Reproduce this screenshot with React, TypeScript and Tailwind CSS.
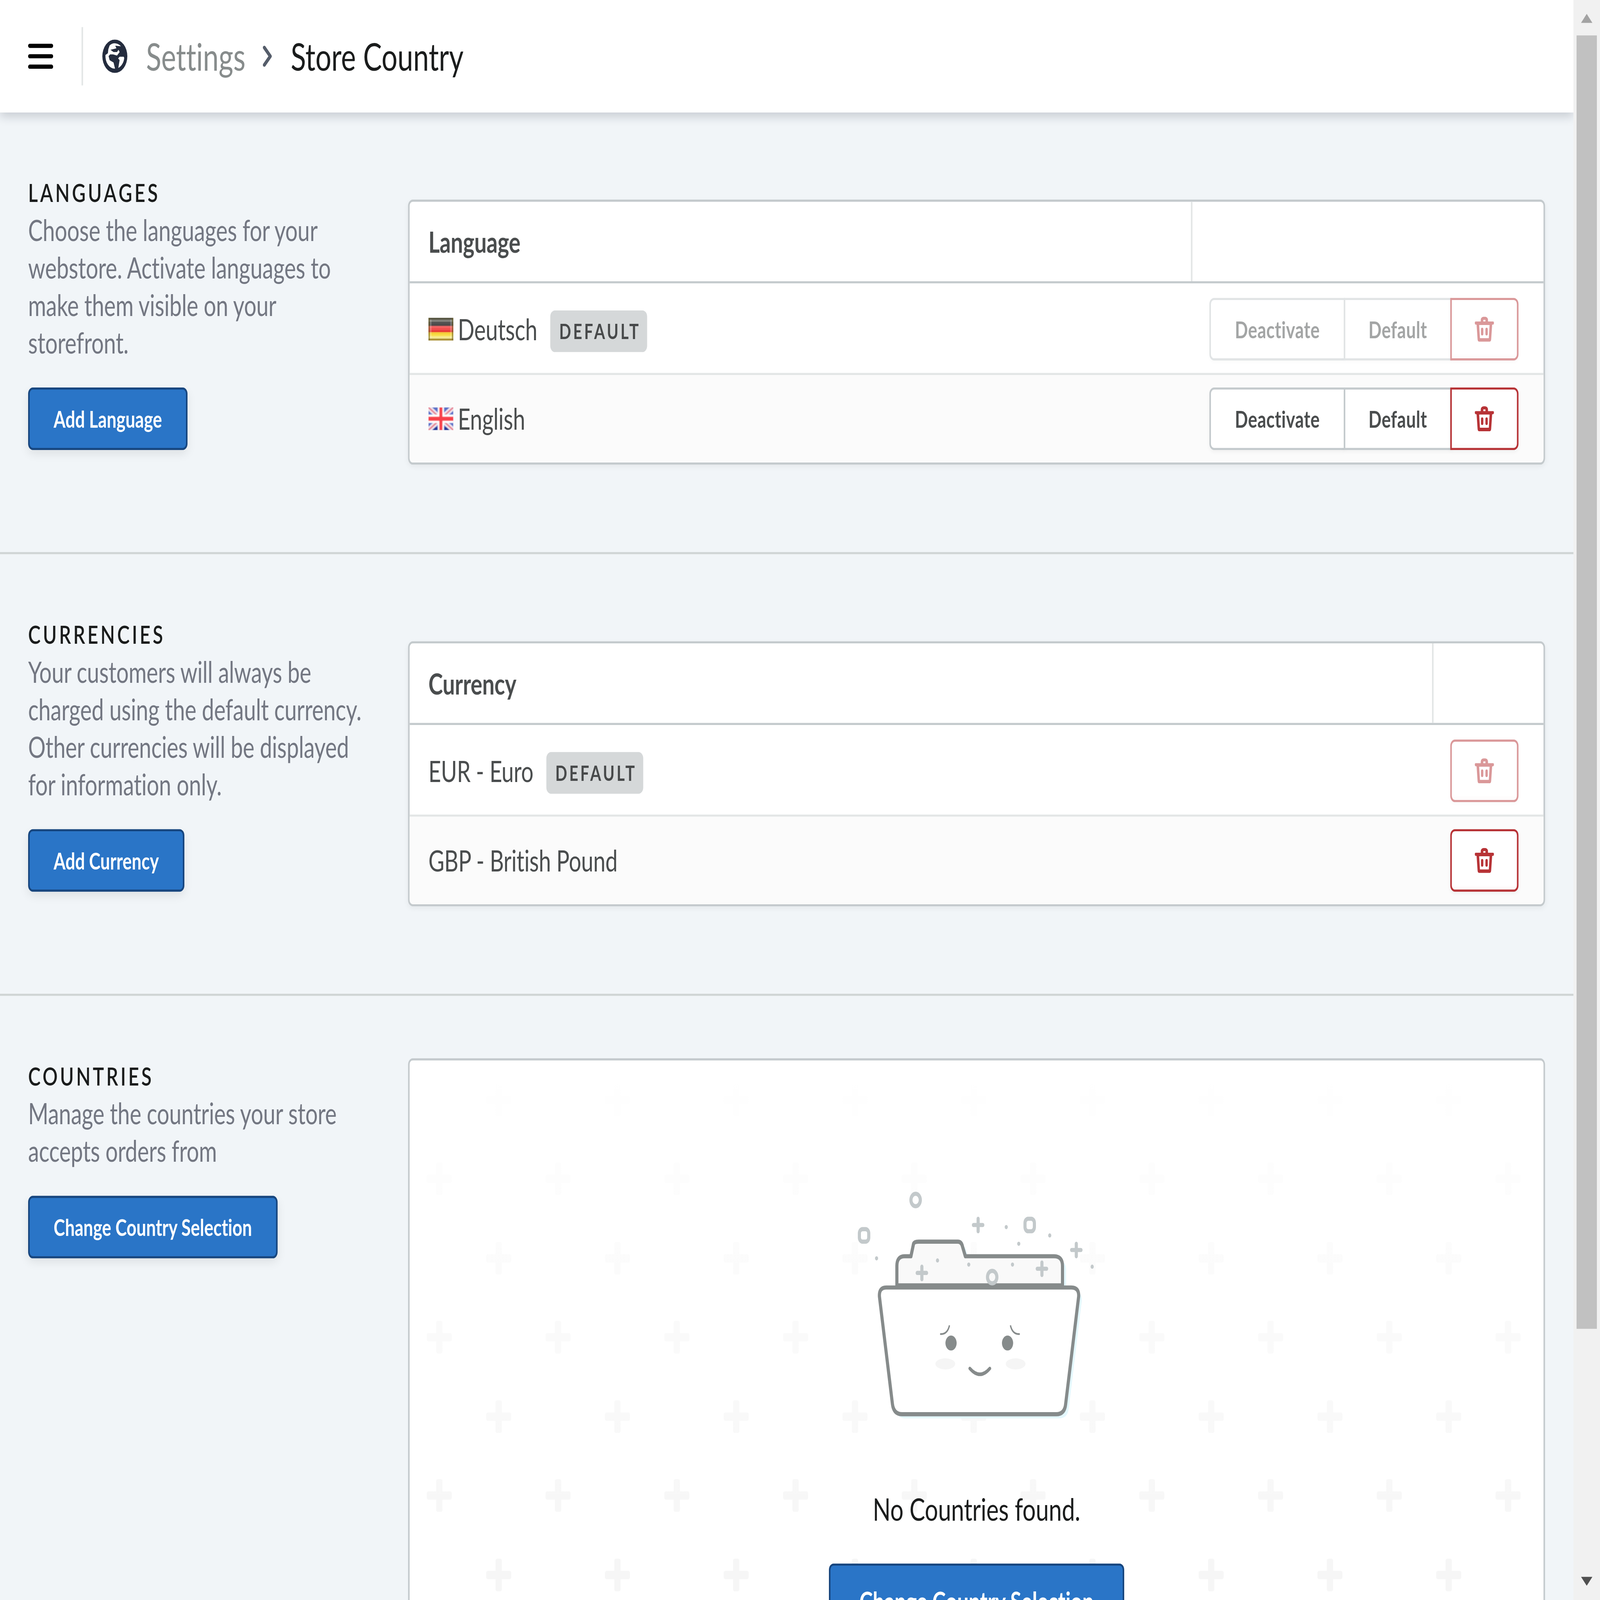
function TrashIcon() {
  return (
    <svg viewBox="0 0 74 72" className="w-[74px] h-[72px]" fill="#b73336">
      <path
        fillRule="evenodd"
        d="M23 14 V10 Q23 0 37 0 Q51 0 51 10 V14 H70 Q74 14 74 18 Q74 22 70 23 H67 L63 66 Q62 72 57 72 H17 Q12 72 11 66 L7 23 H4 Q0 22 0 18 Q0 14 4 14 Z M33 9 V14 H41 V9 Z M17 24 L20 62 H54 L57 24 Z"
      />
      <rect x="24" y="32" width="9" height="22" rx="4.5" />
      <rect x="41" y="32" width="9" height="22" rx="4.5" />
    </svg>
  );
}

function GlobeIcon() {
  return (
    <svg viewBox="0 0 96 96" className="w-[96px] h-[96px] ml-[74px] shrink-0">
      <circle cx="48" cy="48" r="48" fill="#242c3e" />
      <path
        fill="#fff"
        d="M28 16.7 A36 36 0 0 1 71.3 19.3 L49.7 17.7 L54 25.3 L31.3 29.3 L43 36 H56.3 L62 29.3 L66.3 36 L56.3 46 L41.3 42.7 H29.7 L24 47.7 L28 59.3 L43 66 L48.7 83.7 A36 36 0 0 1 12 44.3 L21.3 39.3 L23 27.7 Z"
      />
      <path fill="#fff" d="M60.7 54.3 L66.3 49.3 H82 L84 52.7 A36 36 0 0 1 61.3 81.7 L66.3 59.3 Z" />
    </svg>
  );
}

function FlagDE() {
  const rows = ['#4a4732', '#80807a', '#4b4b4b', '#3f3f3f', '#f56060', '#f14b4b', '#e62c2c', '#f6d136', '#f8df4e', '#f8ec8e', '#a68a2c'];
  return (
    <svg viewBox="0 0 16 11" className="w-[96px] h-[66px] shrink-0">
      <defs>
        <filter id="flagBlurDe" x="0" y="0" width="100%" height="100%">
          <feGaussianBlur stdDeviation="0.18" />
        </filter>
      </defs>
      <g filter="url(#flagBlurDe)">
        {rows.map((c, i) => (
          <rect key={i} x="0" y={i} width="16" height="1" fill={c} />
        ))}
        <rect x="0" y="0" width="1" height="11" fill="#6b5f24" opacity="0.55" />
        <rect x="15" y="0" width="1" height="11" fill="#6b5f24" opacity="0.55" />
        <rect x="1" y="1" width="1" height="9" fill="#fff" opacity="0.22" />
        <rect x="14" y="1" width="1" height="9" fill="#fff" opacity="0.22" />
      </g>
    </svg>
  );
}

function FlagGB() {
  return (
    <svg viewBox="0 0 16 11" className="w-[96px] h-[66px] shrink-0">
      <defs>
        <filter id="flagBlurGb" x="0" y="0" width="100%" height="100%">
          <feGaussianBlur stdDeviation="0.2" />
        </filter>
      </defs>
      <g filter="url(#flagBlurGb)">
        <rect width="16" height="11" fill="#5a70c8" />
        <rect y="9.5" width="16" height="1.5" fill="#1a2f8f" opacity="0.85" />
        <path d="M0 0 L16 11 M16 0 L0 11" stroke="#efe6ee" strokeWidth="2.6" />
        <path d="M0 0 L16 11 M16 0 L0 11" stroke="#e77c8c" strokeWidth="0.8" />
        <rect x="6" y="0" width="4" height="11" fill="#fff" />
        <rect x="0" y="3.5" width="16" height="4" fill="#fff" />
        <rect x="7" y="0" width="2" height="11" fill="#f8404a" />
        <rect x="0" y="4.5" width="16" height="2" fill="#f8404a" />
      </g>
    </svg>
  );
}

function Badge() {
  return (
    <span className="inline-flex items-center h-[120px] mt-[12px] ml-[50px] pl-[34px] pr-[24px] rounded-[18px] bg-[#d5d8d9] text-[60px] font-bold tracking-[8px] text-[#47494a]">
      DEFAULT
    </span>
  );
}

function DeleteButton({ alone }: { alone?: boolean }) {
  return (
    <button
      className={
        alone
          ? 'relative z-10 flex items-center justify-center w-[262px] h-[180px] bg-white border-[6px] border-[#b73336] rounded-[18px] shadow-[0_6px_12px_rgba(0,0,0,0.04),inset_0_-6px_12px_rgba(183,51,54,0.04)]'
          : 'relative z-10 flex items-center justify-center w-[262px] h-[180px] -ml-[6px] bg-white border-[6px] border-[#b73336] rounded-r-[18px] shadow-[0_6px_12px_rgba(0,0,0,0.04),inset_0_-6px_12px_rgba(183,51,54,0.04)]'
      }
    >
      <TrashIcon />
    </button>
  );
}

function RowActions() {
  return (
    <div className="flex">
      <button className="h-[180px] w-[522px] bg-white border-[6px] border-[#c4cacd] rounded-l-[18px] text-[66px] tracking-[0.8px] font-bold text-[#4a4d4e] shadow-[0_6px_12px_rgba(0,0,0,0.04)]">
        Deactivate
      </button>
      <button className="h-[180px] w-[415px] -ml-[6px] bg-white border-[6px] border-[#c4cacd] text-[66px] tracking-[0.8px] font-bold text-[#4a4d4e] shadow-[0_6px_12px_rgba(0,0,0,0.04)]">
        Default
      </button>
      <DeleteButton />
    </div>
  );
}

function SectionHead({ title, text, action }: { title: string; text: string; action: string }) {
  return (
    <div className="w-[1340px] shrink-0 pt-[176px]">
      <h2 className="text-[72px] leading-[108px] font-semibold tracking-[8.8px] text-[#1a1c1c]">{title}</h2>
      <p className="text-[84px] leading-[108px] tracking-[-0.3px] text-[#737782]">{text}</p>
      <button className="mt-[76px] h-[180px] px-[92px] bg-[#2a75c7] border-[6px] border-[#17467f] rounded-[18px] text-[66px] font-bold text-white shadow-[0_12px_30px_rgba(0,0,0,0.08)]">
        {action}
      </button>
    </div>
  );
}

function CardHeader({ label, width }: { label: string; width: string }) {
  return (
    <div className="flex h-[235px] border-b-[6px] border-[#c4cacd]">
      <div className={width}>
        <span className="block pl-[72px] leading-[229px] text-[84px] font-bold text-[#4a4d4e]">{label}</span>
      </div>
    </div>
  );
}

function Languages() {
  return (
    <section className="flex justify-between pl-[108px] pr-[109px] pb-[252px] border-b-[6px] border-[#d0d5d5]">
      <SectionHead
        title="LANGUAGES"
        text="Choose the languages for your webstore. Activate languages to make them visible on your storefront."
        action="Add Language"
      />
      <div className="w-[4366px] mt-[251px] bg-white border-[6px] border-[#c4cacd] rounded-[18px] shadow-[0_6px_18px_rgba(0,0,0,0.05)] text-[84px] tracking-[-0.4px] text-[#4a4d4e]">
        <CardHeader label="Language" width="w-[3006px] h-[229px] border-r-[6px] border-[#e3e6e6]" />
        <div className="flex items-center justify-between h-[264px] pt-[6px] pl-[72px] pr-[96px] border-b-[6px] border-[#e3e6e6]">
          <div className="flex items-center">
            <FlagDE />
            <span className="ml-[17px]">Deutsch</span>
            <Badge />
          </div>
          <div className="opacity-50">
            <RowActions />
          </div>
        </div>
        <div className="flex items-center justify-between h-[252px] pl-[72px] pr-[96px] bg-[#fbfbfb] rounded-b-[12px]">
          <div className="flex items-center">
            <FlagGB />
            <span className="ml-[17px]">English</span>
          </div>
          <RowActions />
        </div>
      </div>
    </section>
  );
}

function Currencies() {
  return (
    <section className="flex justify-between pl-[108px] pr-[109px] pb-[252px] border-b-[6px] border-[#d0d5d5]">
      <SectionHead
        title="CURRENCIES"
        text="Your customers will always be charged using the default currency. Other currencies will be displayed for information only."
        action="Add Currency"
      />
      <div className="w-[4366px] mt-[251px] bg-white border-[6px] border-[#c4cacd] rounded-[18px] shadow-[0_6px_18px_rgba(0,0,0,0.05)] text-[84px] tracking-[-0.4px] text-[#4a4d4e]">
        <CardHeader label="Currency" width="w-[3932px] h-[229px] border-r-[6px] border-[#e3e6e6]" />
        <div className="flex items-center justify-between h-[264px] pt-[6px] pl-[72px] pr-[96px] border-b-[6px] border-[#e3e6e6]">
          <div className="flex items-center">
            <span>EUR - Euro</span>
            <Badge />
          </div>
          <div className="opacity-50">
            <DeleteButton alone />
          </div>
        </div>
        <div className="flex items-center justify-between h-[252px] pl-[72px] pr-[96px] bg-[#fbfbfb] rounded-b-[12px]">
          <span>GBP - British Pound</span>
          <DeleteButton alone />
        </div>
      </div>
    </section>
  );
}

function PlusBackdrop() {
  return (
    <svg className="absolute inset-0 w-full h-full">
      <defs>
        <pattern id="plusGrid" width="456" height="456" y="228" patternUnits="userSpaceOnUse">
          <rect x="66" y="101" width="96" height="24" rx="6" fill="#f6f6f6" />
          <rect x="102" y="66" width="24" height="94" rx="6" fill="#f6f6f6" />
          <rect x="294" y="330" width="96" height="24" rx="6" fill="#f6f6f6" />
          <rect x="330" y="295" width="24" height="94" rx="6" fill="#f6f6f6" />
        </pattern>
        <linearGradient id="plusFade" x1="0" y1="0" x2="0" y2="1500" gradientUnits="userSpaceOnUse">
          <stop offset="0" stopColor="#fff" stopOpacity="1" />
          <stop offset="1" stopColor="#fff" stopOpacity="0" />
        </linearGradient>
      </defs>
      <rect width="100%" height="100%" fill="url(#plusGrid)" />
      <rect width="100%" height="100%" fill="url(#plusFade)" />
    </svg>
  );
}

const backPath =
  'M294 352 V296 Q294 268 323 268 H348 L358 232 Q361 226 378 226 H528 Q542 226 546 240 L557 268 H898 Q930 268 930 296 V352 Z';
const frontPath =
  'M253 358 H964 Q994 358 992 384 L942 694 Q938 723 906 723 H314 Q282 723 277 694 L227 384 Q225 358 253 358 Z';

function Plus({ x, y }: { x: number; y: number }) {
  return <path d={`M${x - 18} ${y} H${x + 18} M${x} ${y - 18} V${y + 18}`} stroke="#c3c9cb" strokeWidth="12" strokeLinecap="round" fill="none" />;
}

function EmptyFolder() {
  const dots = [
    [216, 274], [450, 280], [570, 292], [714, 184], [762, 232], [738, 292], [881, 208], [1044, 298],
  ];
  return (
    <svg viewBox="0 0 1200 800" className="relative w-[1200px] h-[800px] shrink-0">
      <path d={backPath} transform="translate(14 12)" fill="#e1f7fe" opacity="0.9" />
      <path d={frontPath} transform="translate(12 12)" fill="#e1f7fe" opacity="0.9" />
      <path d={backPath} fill="#f9f9f9" stroke="#868b8b" strokeWidth="12" strokeLinejoin="round" />
      <path d={frontPath} fill="#fff" stroke="#868b8b" strokeWidth="12" strokeLinejoin="round" />
      <circle cx="366" cy="106" r="18" fill="none" stroke="#c3c9cb" strokeWidth="12" />
      <circle cx="660" cy="328" r="18" fill="none" stroke="#c3c9cb" strokeWidth="12" />
      <rect x="150" y="190" width="36" height="36" rx="12" fill="none" stroke="#c3c9cb" strokeWidth="12" />
      <rect x="786" y="160" width="36" height="36" rx="12" fill="none" stroke="#c3c9cb" strokeWidth="12" />
      <Plus x={606} y={178} />
      <Plus x={983} y={250} />
      <Plus x={851} y={304} />
      <Plus x={390} y={316} />
      {dots.map(([cx, cy]) => (
        <circle key={cx} cx={cx} cy={cy} r="6" fill="#c3c9cb" />
      ))}
      <circle cx="502" cy="518" r="21.5" fill="#868b8b" />
      <circle cx="719" cy="518" r="21.5" fill="#868b8b" />
      <path d="M460 492 Q488 494 496 467" fill="none" stroke="#868b8b" strokeWidth="5" />
      <path d="M766 492 Q738 494 730 467" fill="none" stroke="#868b8b" strokeWidth="5" />
      <ellipse cx="480" cy="578" rx="38" ry="16" fill="#f5f5f5" />
      <ellipse cx="750" cy="578" rx="38" ry="16" fill="#f5f5f5" />
      <path d="M574 591 Q613 625 651 591" fill="none" stroke="#868b8b" strokeWidth="10" strokeLinecap="round" />
    </svg>
  );
}

function Countries() {
  return (
    <section className="flex justify-between pl-[108px] pr-[109px]">
      <SectionHead
        title="COUNTRIES"
        text="Manage the countries your store accepts orders from"
        action="Change Country Selection"
      />
      <div className="relative w-[4366px] h-[1800px] shrink-0 mt-[180px] bg-white border-[6px] border-[#c4cacd] rounded-[18px] overflow-hidden">
        <PlusBackdrop />
        <div className="relative flex flex-col items-center pt-[296px]">
          <EmptyFolder />
          <p className="mt-[141px] text-[90px] leading-[108px] tracking-[-0.2px] text-[#1a1c1c]">No Countries found.</p>
          <button className="mt-[104px] h-[216px] px-[111px] bg-[#2a75c7] border-[6px] border-[#17467f] rounded-[18px] text-[78px] font-bold text-white">
            Change Country Selection
          </button>
        </div>
      </div>
    </section>
  );
}

function Scrollbar() {
  return (
    <div className="flex flex-col items-center w-[102px] h-full shrink-0 bg-[#f1f1f1]">
      <svg viewBox="0 0 44 26" className="w-[44px] h-[26px] mt-[40px]">
        <path d="M22 0 L44 26 H0 Z" fill="#a3a3a3" />
      </svg>
      <div className="w-[78px] h-[3725px] mt-[36px] bg-[#c1c1c1]" />
      <svg viewBox="0 0 44 26" className="w-[44px] h-[26px] mt-auto mb-[41px]">
        <path d="M0 0 H44 L22 26 Z" fill="#505050" />
      </svg>
    </div>
  );
}

export default function App() {
  // the window can come up smaller than the 6144x4608 page, so fit the page to it
  const fit = `scale(${window.innerWidth / 6144}, ${window.innerHeight / 4608})`;
  return (
    <div className="w-screen h-screen overflow-hidden">
      <div
        className="flex w-[6144px] h-[4608px] overflow-hidden origin-top-left bg-[#f1f5f8] font-[Lato,sans-serif] [font-variant-ligatures:none]"
        style={{ transform: fit }}
      >
        <div className="flex-1 min-w-0 h-full overflow-hidden">
          <header className="relative z-10 flex items-center h-[324px] pl-[108px] bg-white shadow-[0_12px_30px_rgba(20,30,50,0.18)]">
            <div className="flex flex-col gap-[18px] w-[96px]">
              <span className="h-[12px] rounded-[6px] bg-black" />
              <span className="h-[12px] rounded-[6px] bg-black" />
              <span className="h-[12px] rounded-[6px] bg-black" />
            </div>
            <span className="w-[6px] h-[168px] ml-[109px] bg-[#e3e6e6]" />
            <GlobeIcon />
            <span className="ml-[72px] text-[108px] text-[#878c8c]">Settings</span>
            <svg viewBox="0 0 35 60" className="w-[35px] h-[60px] ml-[67px]" fill="none" stroke="#555d6a" strokeWidth="11" strokeLinecap="round" strokeLinejoin="round">
              <path d="M6 5 L29 30 L6 55" />
            </svg>
            <span className="ml-[72px] text-[108px] text-[#1a1c1c]">Store Country</span>
          </header>
          <Languages />
          <Currencies />
          <Countries />
        </div>
        <Scrollbar />
      </div>
    </div>
  );
}
